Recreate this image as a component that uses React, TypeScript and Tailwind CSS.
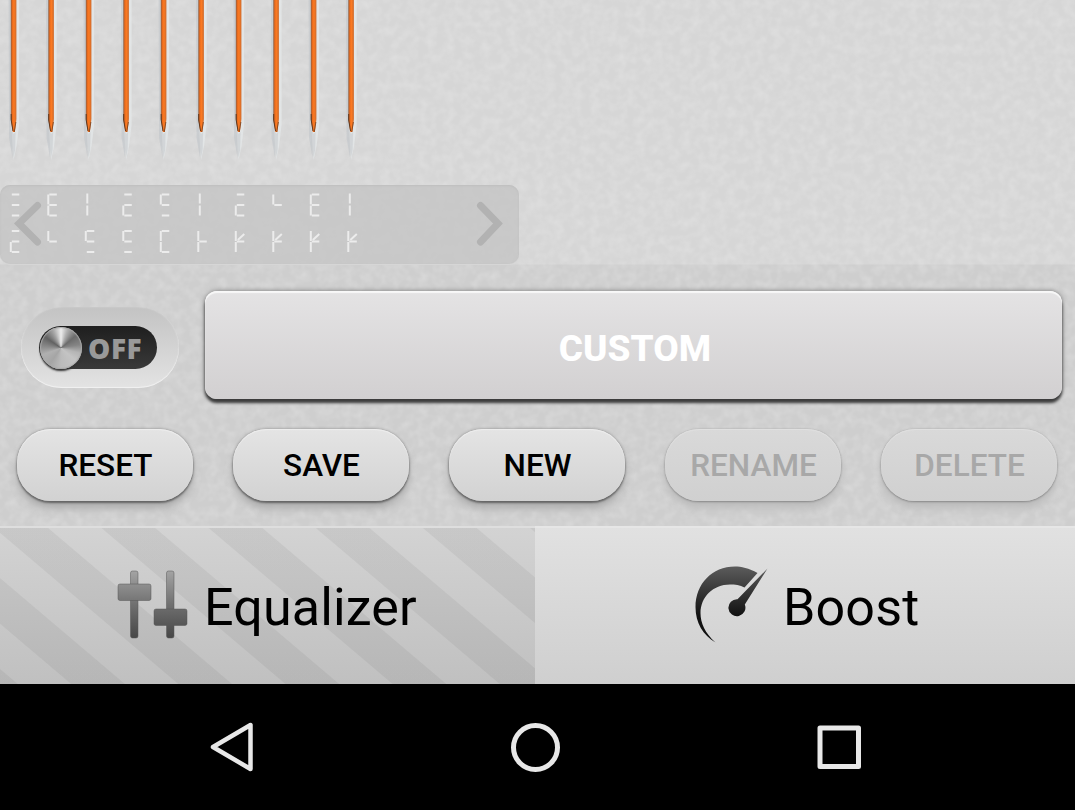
import React from "react";

type Seg = "t" | "m" | "b" | "ul" | "ll" | "cu" | "cl" | "d";

const ROW_ONE: Seg[][] = [
  ["t", "m", "b"],
  ["t", "m", "b", "ul", "ll"],
  ["cu", "cl"],
  ["t", "m", "ll", "b"],
  ["t", "ul", "m", "b"],
  ["cu", "cl"],
  ["t", "m", "ll", "b"],
  ["ul", "m"],
  ["t", "m", "b", "ul", "ll"],
  ["cu", "cl"],
];

const ROW_TWO: Seg[][] = [
  ["t", "m", "ll", "b"],
  ["ul", "m"],
  ["t", "ul", "m", "b"],
  ["t", "ul", "m", "b"],
  ["t", "ul", "ll", "b"],
  ["ul", "ll", "m"],
  ["ul", "ll", "m", "d"],
  ["ul", "ll", "m", "d"],
  ["ul", "ll", "m", "d"],
  ["ul", "ll", "m", "d"],
];

const SEGMENTS: Record<Seg, [number, number, number, number]> = {
  t: [1, 0, 8.5, 0],
  m: [1, 10.5, 8.5, 10.5],
  b: [1, 21, 8.5, 21],
  ul: [0, 0, 0, 10],
  ll: [0, 11, 0, 21],
  cu: [1.5, -1, 1.5, 9],
  cl: [1.5, 11, 1.5, 21],
  d: [2, 9, 8.5, 3],
};

function Texture() {
  return (
    <svg className="absolute inset-0 h-full w-full" aria-hidden="true">
      <filter id="grain" x="0" y="0" width="100%" height="100%">
        <feTurbulence type="fractalNoise" baseFrequency="0.11" numOctaves="2" seed="8" />
        <feColorMatrix
          type="matrix"
          values="0 0 0 0 1  0 0 0 0 1  0 0 0 0 1  1.1 0 0 0 -0.38"
        />
      </filter>
      <rect width="100%" height="100%" filter="url(#grain)" opacity="0.32" />
    </svg>
  );
}

function Needles() {
  return (
    <svg className="relative block" width="372" height="185" viewBox="0 0 372 185">
      <defs>
        <linearGradient id="needle" x1="0" x2="1" y1="0" y2="0">
          <stop offset="0" stopColor="#8a5d42" />
          <stop offset="0.28" stopColor="#e96a1c" />
          <stop offset="0.55" stopColor="#fb7a22" />
          <stop offset="1" stopColor="#cf6a2b" />
        </linearGradient>
      </defs>
      {ROW_ONE.map((_, i) => (
        <g key={i} transform={`translate(${13.6 + i * 37.5} 0)`}>
          <path d="M-5 0H-2V120L-1 158L-4.5 138Z" fill="#bcc2c7" opacity="0.5" />
          <path d="M2 0H5.5V125L3 146L0 160L-2 130Z" fill="#e4e7e9" opacity="0.8" />
          <path d="M-2 130L0 134L2 132L1.500 150L0 157L-2.500 142Z" fill="#c8cccf" opacity="0.6" />
          <path d="M-2.8 0H2.8V119L1.3 132H-.8L-2.8 119Z" fill="url(#needle)" />
          <path d="M-2.4 114V120L-.6 131" fill="none" stroke="#5c371f" strokeWidth="1" />
          <path d="M2.3 122L.6 132" fill="none" stroke="#743b18" strokeWidth=".8" />
        </g>
      ))}
    </svg>
  );
}

function DigitRow({ row, y }: { row: Seg[][]; y: number }) {
  return (
    <>
      {row.map((segs, i) => (
        <g key={i} transform={`translate(${10.8 + i * 37.5} ${y})`}>
          {segs.map((s) => {
            const [x1, y1, x2, y2] = SEGMENTS[s];
            return <line key={s} x1={x1} y1={y1} x2={x2} y2={y2} />;
          })}
        </g>
      ))}
    </>
  );
}

function Display() {
  return (
    <div className="relative h-[79px] w-[519px] rounded-[10px] bg-[#c6c6c6]/85 shadow-[inset_0_1px_2px_#bebebe,0_1px_0_#d6d6d6]">
      <svg width="519" height="79" viewBox="0 0 519 79" fill="none">
        <g stroke="#b2b2b2" strokeWidth="7" strokeLinecap="round">
          <path d="M37.500 20.500L19 38.500L37.500 57" />
          <path d="M480.500 20.500L498 38.500L480.500 57" />
        </g>
        <g stroke="#ececec" strokeWidth="2">
          <DigitRow row={ROW_ONE} y={9.5} />
          <DigitRow row={ROW_TWO} y={46} />
        </g>
      </svg>
    </div>
  );
}

function PowerSwitch() {
  return (
    <button className="mt-4 flex h-[81px] w-[158px] items-center rounded-full bg-linear-to-b from-[#c3c3c3] to-[#e3e3e3] pl-[18px] shadow-[inset_0_-1px_1px_#f2f2f2,inset_0_0_2px_#dadada]">
      <span className="flex h-[43px] w-[118px] items-center rounded-full bg-linear-to-b from-[#1f1f1f] to-[#393939]">
        <span className="ml-px size-[42px] shrink-0 rounded-full bg-[conic-gradient(#ededed_0deg,#b0b0b0_20deg,#6b6b6b_50deg,#858585_80deg,#b5b5b5_105deg,#c4c4c4_130deg,#bbb_180deg,#a5a5a5_215deg,#b0b0b0_250deg,#8a8a8a_275deg,#626262_305deg,#a5a5a5_335deg,#ededed_360deg)] shadow-[0_2px_2px_#333,inset_0_0_1px_1px_#aaa]" />
        <span className="ml-1.5 font-['Open_Sans',sans-serif] text-[28px] leading-none font-extrabold tracking-[0.6px] text-[#999]">
          OFF
        </span>
      </span>
    </button>
  );
}

function PresetButton({ label, disabled = false }: { label: string; disabled?: boolean }) {
  return (
    <button
      disabled={disabled}
      className="flex h-[72px] w-[176px] items-center justify-center rounded-[34px] bg-linear-to-b from-[#e4e4e4] to-[#d2d2d2] pt-0.5 pl-px text-[31.5px] font-medium text-black shadow-[0_2px_2px_#666,0_0_3px_#888,0_7px_9px_#aaa,inset_0_1px_1px_#eee] disabled:from-[#d9d9d9] disabled:to-[#d0d0d0] disabled:text-[#a8a8a8] disabled:shadow-[0_1px_2px_#888,0_0_2px_#b0b0b0,0_7px_9px_#bbb,inset_0_1px_1px_#e0e0e0]"
    >
      {label}
    </button>
  );
}

function SlidersIcon() {
  return (
    <svg className="mb-0.5" width="72" height="70" viewBox="0 0 72 70">
      <defs>
        <linearGradient id="sliders" x1="0" x2="0" y1="0" y2="70" gradientUnits="userSpaceOnUse">
          <stop offset="0" stopColor="#a5a5a5" />
          <stop offset="0.5" stopColor="#6f6f6f" />
          <stop offset="1" stopColor="#444" />
        </linearGradient>
      </defs>
      <g fill="url(#sliders)" stroke="#555" strokeOpacity=".7" strokeWidth=".7">
        <rect x="13.500" y="1" width="7.500" height="67" rx="2" />
        <rect x="49.500" y="1" width="7.500" height="67" rx="2" />
        <rect x="1" y="14" width="33" height="16.500" rx="2" />
        <rect x="37" y="39" width="33" height="16.500" rx="2" />
      </g>
    </svg>
  );
}

function GaugeIcon() {
  return (
    <svg className="mb-0.5" width="74" height="78" viewBox="0 0 74 78">
      <defs>
        <linearGradient id="gauge" x1="0" x2="0" y1="0" y2="50" gradientUnits="userSpaceOnUse">
          <stop offset="0" stopColor="#5c5c5c" />
          <stop offset="1" stopColor="#111" />
        </linearGradient>
      </defs>
      <g fill="url(#gauge)">
        <path d="M62.500 7C54 2 46 .5 40 .5C17 .5 .5 18 .5 41C.5 57 8 69 20.500 76.500C10 67 5.500 57 5.500 47C5.500 31 18 18.500 35 18.500C40 18.500 45 19 49.500 21.500Z" />
        <path d="M72.500 2.500L42.500 33.200A8.500 8.500 0 1 0 49.800 38.500Z" />
      </g>
    </svg>
  );
}

export default function App() {
  return (
    <div className="flex h-[810px] w-[1075px] flex-col overflow-hidden bg-black font-[Roboto,sans-serif] text-black">
      <main className="relative h-[526px] bg-[linear-gradient(#d6d6d6_0,#d6d6d6_264px,#cecece_265px,#cecece_100%)]">
        <Texture />
        <Needles />
        <Display />
        <section className="relative flex gap-[26px] pt-[27px] pl-[21px]">
          <PowerSwitch />
          <button className="flex h-[108px] w-[857px] items-center justify-center rounded-xl bg-linear-to-b from-[#e4e3e4] to-[#d2d0d1] pt-2 pl-[3px] text-[37px] font-extrabold text-white shadow-[0_4px_3px_#3c3c3c,0_0_5px_#777,inset_0_2px_1px_#f8f8f8]">
            CUSTOM
          </button>
        </section>
        <section className="relative flex gap-10 pt-[30px] pl-[17px]">
          <PresetButton label="RESET" />
          <PresetButton label="SAVE" />
          <PresetButton label="NEW" />
          <PresetButton label="RENAME" disabled />
          <PresetButton label="DELETE" disabled />
        </section>
      </main>
      <div className="flex h-[158px] text-[52px]">
        <button className="flex w-[535px] items-center gap-4 border-t-2 border-[#dedede] bg-[repeating-linear-gradient(40.3deg,#0000000d_0,#0000000d_11px,transparent_12px,transparent_45.5px,#0000000d_46.5px,#0000000d_69.3px),linear-gradient(#d3d3d3,#c0c0c0)] pl-[117px]">
          <SlidersIcon />
          <span className="-ml-px pt-1 tracking-[0.15px]">Equalizer</span>
        </button>
        <button className="flex w-[540px] items-center border-t-2 border-[#e6e6e6] bg-linear-to-b from-[#e1e1e1] to-[#cfcfcf] pl-[160px]">
          <GaugeIcon />
          <span className="ml-[14px] pt-1 tracking-[0.15px]">Boost</span>
        </button>
      </div>
      <nav className="flex h-[126px] items-center bg-black pl-[209px]">
        <svg width="46" height="52" viewBox="0 0 46 52" fill="none" stroke="#e8e8e8" strokeWidth="4.500" strokeLinejoin="round">
          <path d="M41.500 4V48L4 26Z" />
        </svg>
        <svg className="ml-[255px]" width="50" height="50" viewBox="0 0 50 50" fill="none" stroke="#e8e8e8" strokeWidth="5">
          <circle cx="25.500" cy="25.500" r="22" />
        </svg>
        <svg className="ml-[257px]" width="44" height="44" viewBox="0 0 44 44" fill="none" stroke="#e8e8e8" strokeWidth="5" strokeLinejoin="round">
          <rect x="3" y="3" width="38.500" height="38.500" />
        </svg>
      </nav>
    </div>
  );
}
